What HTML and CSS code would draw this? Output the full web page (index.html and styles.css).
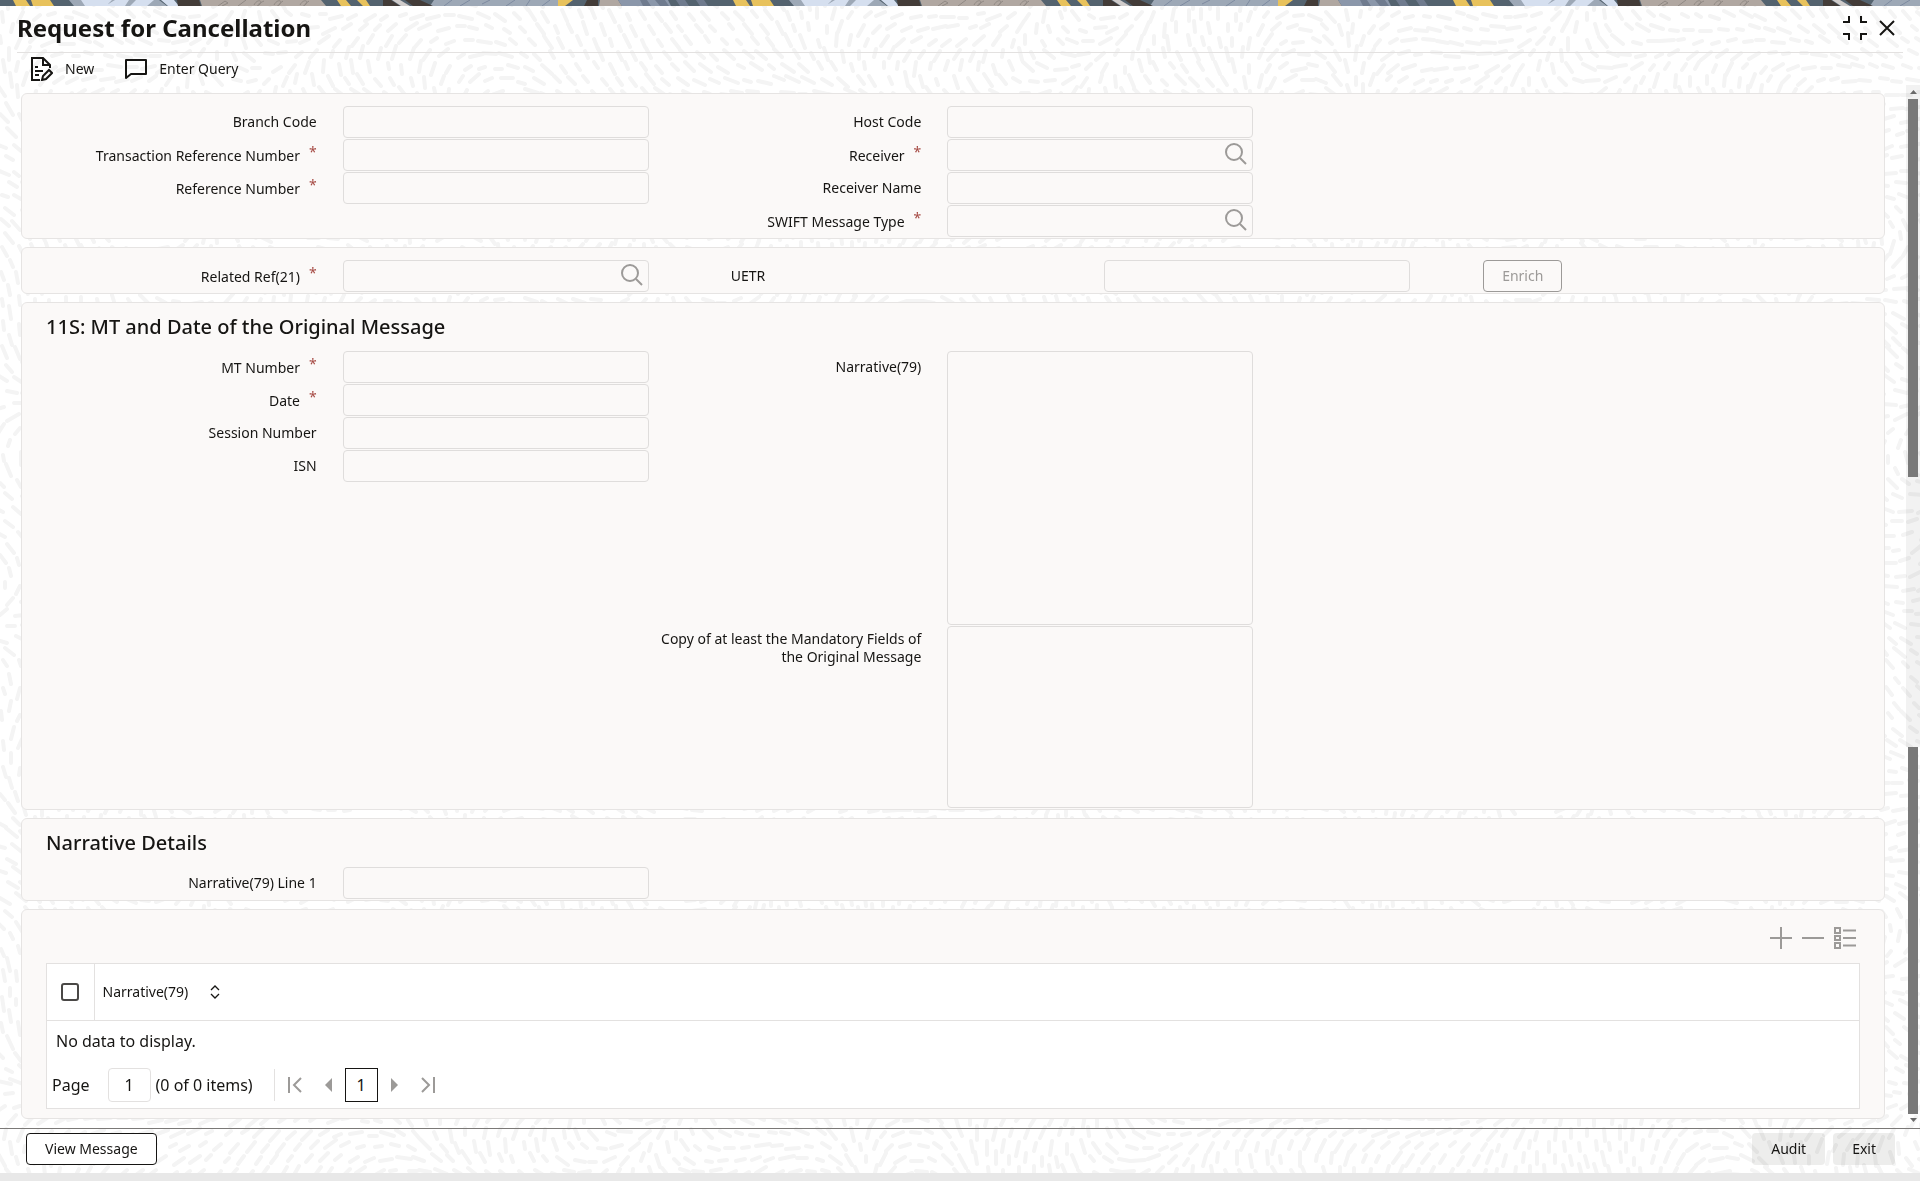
FILE: index.html
```html
<!DOCTYPE html>
<html lang="en">
<head>
<meta charset="utf-8">
<title>Request for Cancellation</title>
<link rel="stylesheet" href="styles.css">
</head>
<body>
<svg class="backdrop" id="backdrop" aria-hidden="true"></svg>
<div class="banner">
  <svg width="100%" height="6" aria-hidden="true">
    <defs>
      <pattern id="strip" width="720" height="6" patternUnits="userSpaceOnUse">
        <rect width="720" height="6" fill="#54636f"/>
        <path fill="#e8c25c" d="M13 0h13l4 6H16zM31 0h19l4 6H33zM337 0h9l5 6h-10zM357 0h9l4 6h-7zM558 0h15l-8 6h-7z"/>
        <path fill="#9da8b6" d="M69 0h90l8 6H74zM434 0h124v6H430z"/>
        <path fill="#d5dfef" d="M81 0h31l-6 6H85zM115 0h14l-4 6h-20zM136 0h18l-7 6h-17zM161 0h13l5 6h-11z"/>
        <path fill="#433c38" d="M177 0h22l2 6h-23zM383 0h8l9 6h-17zM405 0h15l13 6h-20zM587 0h11v6h-14z"/>
        <path fill="#b0a7a1" d="M200 0h121l5 6H202zM600 0h18l4 6h-23z"/>
        <path fill="#d0cccb" d="M392 0h8l10 6h-9z"/>
        <path fill="#8b97aa" d="M618 0h50l3 6h-49z"/>
        <path fill="#6f7b8e" d="M640 0h7l4 6h-8zM655 0h10l4 6h-9zM676 0h9l4 6h-9zM696 0h8l4 6h-8z"/>
        <path fill="none" stroke="#8f8883" d="M218 6l7-5 3 2-6 3M238 6l8-6M254 5c3-6 9-5 6-1s-5 1 4-3M274 5c3-6 9-5 6-1s-4 2 3-3M300 5c3-6 9-5 6-1s-4 2 3-3"/>
        <path fill="none" stroke="#7d8aa0" d="M444 6l8-6M460 6l10-6M482 4l8-4M506 6l9-6M526 6l4-6M542 6l8-6"/>
      </pattern>
    </defs>
    <rect width="100%" height="6" fill="url(#strip)"/>
  </svg>
</div>

<header class="titlebar">
  <h1>Request for Cancellation</h1>
  <div class="window-tools">
    <button type="button" class="icon-btn" aria-label="Collapse">
      <svg width="24" height="24" viewBox="0 0 24 24" fill="none" stroke="#161513" stroke-width="2"><path d="M0 6h6V0M18 0v6h6M0 18h6v6M18 24v-6h6"/></svg>
    </button>
    <button type="button" class="icon-btn" aria-label="Close">
      <svg width="16" height="16" viewBox="0 0 16 16" fill="none" stroke="#161513" stroke-width="2"><path d="M1 1l14 14M15 1L1 15"/></svg>
    </button>
  </div>
</header>

<nav class="toolbar">
  <button type="button" class="tool">
    <svg width="22" height="24" viewBox="0 0 22 24" fill="none" stroke="#161513" stroke-width="2"><path d="M9 23H1V1h11l7 7v3M12 1v7h7M4 10h3M4 14h8M4 18h4"/><path d="M11 23l1-4 6-6 3 3-6 6z"/></svg>
    New
  </button>
  <button type="button" class="tool">
    <svg width="22" height="20" viewBox="0 0 22 20" fill="none" stroke="#161513" stroke-width="2" stroke-linejoin="round"><path d="M1 1h20v14H6l-5 4z"/></svg>
    Enter Query
  </button>
</nav>

<div class="work">
  <main class="panels">
    <section class="panel columns">
      <div class="col">
        <div class="field"><label for="branch">Branch Code</label><input id="branch" type="text"></div>
        <div class="field"><label for="txn" class="req">Transaction Reference Number</label><input id="txn" type="text"></div>
        <div class="field"><label for="ref" class="req">Reference Number</label><input id="ref" type="text"></div>
      </div>
      <div class="col">
        <div class="field"><label for="host">Host Code</label><input id="host" type="text"></div>
        <div class="field"><label for="receiver" class="req">Receiver</label><input id="receiver" type="text"><button type="button" class="lookup" aria-label="Search receiver"><svg width="22" height="22" viewBox="0 0 22 22" fill="none" stroke="#9c9a98" stroke-width="2"><circle cx="9" cy="9" r="8"/><path d="M15 15l6 6"/></svg></button></div>
        <div class="field"><label for="rname">Receiver Name</label><input id="rname" type="text"></div>
        <div class="field"><label for="swift" class="req">SWIFT Message Type</label><input id="swift" type="text"><button type="button" class="lookup" aria-label="Search message type"><svg width="22" height="22" viewBox="0 0 22 22" fill="none" stroke="#9c9a98" stroke-width="2"><circle cx="9" cy="9" r="8"/><path d="M15 15l6 6"/></svg></button></div>
      </div>
    </section>

    <section class="panel related">
      <div class="field"><label for="related" class="req">Related Ref(21)</label><input id="related" type="text"><button type="button" class="lookup" aria-label="Search related reference"><svg width="22" height="22" viewBox="0 0 22 22" fill="none" stroke="#9c9a98" stroke-width="2"><circle cx="9" cy="9" r="8"/><path d="M15 15l6 6"/></svg></button></div>
      <label class="uetr" for="uetr">UETR</label>
      <div class="enrich"><input id="uetr" type="text"><button type="button" class="btn muted" disabled>Enrich</button></div>
    </section>

    <section class="panel">
      <h2>11S: MT and Date of the Original Message</h2>
      <div class="columns">
        <div class="col">
          <div class="field"><label for="mt" class="req">MT Number</label><input id="mt" type="text"></div>
          <div class="field"><label for="date" class="req">Date</label><input id="date" type="text"></div>
          <div class="field"><label for="session">Session Number</label><input id="session" type="text"></div>
          <div class="field"><label for="isn">ISN</label><input id="isn" type="text"></div>
        </div>
        <div class="col">
          <div class="field"><label for="narr">Narrative(79)</label><textarea id="narr" class="tall"></textarea></div>
          <div class="field"><label for="copy" class="wrapped">Copy of at least the Mandatory Fields of the Original Message</label><textarea id="copy" class="medium"></textarea></div>
        </div>
      </div>
    </section>

    <section class="panel">
      <h2>Narrative Details</h2>
      <div class="columns">
        <div class="col">
          <div class="field"><label for="line1">Narrative(79) Line 1</label><input id="line1" type="text"></div>
        </div>
      </div>
    </section>

    <section class="panel grid-panel">
      <div class="row-tools">
        <button type="button" class="icon-btn" aria-label="Add row"><svg width="22" height="22" viewBox="0 0 22 22" stroke="#9c9a98" stroke-width="2"><path d="M11 0v22M0 11h22"/></svg></button>
        <button type="button" class="icon-btn" aria-label="Delete row"><svg width="22" height="22" viewBox="0 0 22 22" stroke="#9c9a98" stroke-width="2"><path d="M0 11h22"/></svg></button>
        <button type="button" class="icon-btn" aria-label="Single record view"><svg width="22" height="22" viewBox="0 0 22 22" fill="none" stroke="#9c9a98" stroke-width="2"><path d="M1 1h5v5H1zM1 9h5v4H1zM1 16h5v5H1zM9 3.500h13M9 11h13M9 18.500h13"/></svg></button>
      </div>
      <div class="table-box">
        <table>
          <thead>
            <tr>
              <th class="check"><input type="checkbox" aria-label="Select all"></th>
              <th><span class="sortable">Narrative(79) <svg width="10" height="14" viewBox="0 0 10 14" fill="none" stroke="#161513" stroke-width="1.300"><path d="M1 5l4-4 4 4M1 9l4 4 4-4"/></svg></span></th>
            </tr>
          </thead>
          <tbody>
            <tr><td colspan="2">No data to display.</td></tr>
          </tbody>
        </table>
        <div class="pager">
          <label for="page">Page</label>
          <input id="page" class="page-no" type="text" value="1">
          <span class="count">(0 of 0 items)</span>
          <div class="steps">
            <button type="button" class="icon-btn" aria-label="First page"><svg width="14" height="16" viewBox="0 0 14 16" fill="none" stroke="#9c9a98" stroke-width="2"><path d="M1 0v16M13 1L6 8l7 7"/></svg></button>
            <button type="button" class="icon-btn" aria-label="Previous page"><svg width="7" height="14" viewBox="0 0 7 14" fill="#9c9a98"><path d="M7 0v14L0 7z"/></svg></button>
            <button type="button" class="current" aria-current="page">1</button>
            <button type="button" class="icon-btn" aria-label="Next page"><svg width="7" height="14" viewBox="0 0 7 14" fill="#9c9a98"><path d="M0 0v14l7-7z"/></svg></button>
            <button type="button" class="icon-btn last" aria-label="Last page"><svg width="14" height="16" viewBox="0 0 14 16" fill="none" stroke="#9c9a98" stroke-width="2"><path d="M13 0v16M1 1l7 7-7 7"/></svg></button>
          </div>
        </div>
      </div>
    </section>
  </main>

  <div class="scroll" aria-hidden="true">
    <div class="scroll-outer">
      <svg class="arrow" width="14" height="14" viewBox="0 0 14 14" fill="#6a6a6a"><path d="M4 9h7L7.500 5z"/></svg>
      <div class="thumb"></div>
    </div>
    <div class="scroll-inner">
      <div class="thumb"></div>
      <svg class="arrow" width="14" height="14" viewBox="0 0 14 14" fill="#6a6a6a"><path d="M4 4h7L7.500 8z"/></svg>
    </div>
  </div>
</div>

<footer class="actions">
  <button type="button" class="btn">View Message</button>
  <div class="right">
    <button type="button" class="btn soft">Audit</button>
    <button type="button" class="btn soft">Exit</button>
  </div>
</footer>
<script src="backdrop.js"></script>
</body>
</html>
```
FILE: styles.css
```css
* { box-sizing: border-box; }

body {
  margin: 0;
  min-height: 100vh;
  display: flex;
  flex-direction: column;
  font: 14px/18px "Noto Sans", "Open Sans", sans-serif;
  color: #161513;
  background: #fff;
}

button, input, textarea { font: inherit; color: inherit; }

.backdrop {
  position: fixed;
  inset: 0;
  width: 100%;
  height: 100%;
  z-index: -1;
}

.banner { height: 6px; }
.banner svg { display: block; }

.titlebar {
  display: flex;
  align-items: center;
  justify-content: space-between;
  height: 47px;
  margin: 0 17px;
  padding-bottom: 2px;
  border-bottom: 1px solid #e3e1e0;
}

h1 { margin: 0; font-size: 24px; line-height: 32px; font-weight: 700; }

h2 { margin: 0; font-size: 20px; line-height: 24px; font-weight: 500; padding-bottom: 12px; }

.window-tools { display: flex; align-items: center; gap: 12px; padding-right: 8px; }

.icon-btn { border: 0; padding: 0; background: none; display: block; }
.icon-btn svg { display: block; }

.toolbar { display: flex; align-items: center; gap: 31px; height: 32px; padding: 0 31px; }

.tool {
  display: flex;
  align-items: center;
  gap: 12px;
  border: 0;
  padding: 0;
  background: none;
}

.work { display: flex; flex: 1; }

.panels {
  flex: 1;
  display: flex;
  flex-direction: column;
  gap: 8px;
  padding: 8px 21px 9px;
}

.panel {
  padding: 12px 24px 0;
  background: #fbf9f8;
  border: 1px solid #e6e4e3;
  border-radius: 6px;
}

.columns { display: grid; grid-template-columns: repeat(3, 1fr); }

.field { position: relative; display: flex; padding: 0 2px 1px 0; }

.field label {
  flex: 1;
  padding: 7px 26px 0 0;
  text-align: right;
}
.field label.wrapped { padding-top: 4px; }

.req::after {
  content: "*";
  margin-left: 9px;
  color: #a64b45;
  vertical-align: 4px;
  line-height: 12px;
}

input[type="text"], textarea {
  display: block;
  width: 306px;
  height: 32px;
  margin: 0;
  padding: 0 8px;
  border: 1px solid #dfdddc;
  border-radius: 4px;
  background: transparent;
  resize: none;
}

textarea.tall { height: 274px; }
textarea.medium { height: 182px; }

.lookup {
  position: absolute;
  right: 8px;
  top: 4px;
  padding: 0;
  border: 0;
  background: none;
}
.lookup svg { display: block; }

.related { display: grid; grid-template-columns: 4fr 3fr 5fr; }
.uetr { padding: 7px 0 0 80px; }
.enrich { display: flex; gap: 73px; }

.btn {
  height: 32px;
  padding: 0 18px;
  border: 1px solid #161513;
  border-radius: 4px;
  background: #fff;
}
.btn.muted { background: transparent; border-color: #9c9a98; color: #9c9a98; }
.btn.soft { border-color: transparent; background: rgba(22, 21, 19, .08); }

.grid-panel { padding-bottom: 9px; }

.row-tools { display: flex; justify-content: flex-end; align-items: flex-start; gap: 10px; height: 41px; padding: 5px 4px 0 0; }

.table-box { border: 1px solid #e3e1e0; background: #fff; }

table { width: 100%; border-collapse: collapse; }
th { height: 56px; padding: 0 8px; text-align: left; font-weight: 400; border-bottom: 1px solid #e3e1e0; }
th.check { width: 47px; padding: 0; border-right: 1px solid #e3e1e0; }
td { padding: 8px 9px 0; font-size: 16px; line-height: 24px; }

input[type="checkbox"] {
  appearance: none;
  display: block;
  width: 18px;
  height: 18px;
  margin: 0 auto;
  border: 2px solid #4a4846;
  border-radius: 3px;
  background: #fff;
}

.sortable { display: inline-flex; align-items: center; gap: 22px; }

.pager { display: flex; align-items: center; padding: 15px 5px 6px; font-size: 16px; line-height: 24px; }
.pager .page-no { width: 43px; height: 34px; margin: 0 5px 0 18px; padding: 0; text-align: center; border-color: #e3e1e0; }
.steps { display: flex; align-items: center; gap: 13px; height: 32px; margin-left: 21px; padding-left: 13px; border-left: 1px solid #e3e1e0; }
.steps .icon-btn:first-child { margin-right: 10px; }
.steps .last { margin-left: 10px; }
.current { width: 33px; height: 34px; padding: 0; border: 1px solid #161513; background: #fff; }

.scroll { width: 14px; display: flex; flex-direction: column; }
.scroll-outer { flex: 662; display: flex; flex-direction: column; background: rgba(0, 0, 0, .05); }
.scroll-inner { flex: 380; display: flex; flex-direction: column; }
.arrow { display: block; flex: none; }
.thumb { width: 10px; margin-left: 2px; background: #797979; }
.scroll-outer .thumb { height: 57%; }
.scroll-inner .thumb { flex: 1; }

.actions {
  display: flex;
  justify-content: space-between;
  padding: 4px 25px 8px 26px;
  border-top: 1px solid #7b7977;
  border-bottom: 9px solid #e8e8e8;
}
.right { display: flex; gap: 8px; }
```
FILE: backdrop.js
```js
// Fills the page backdrop with short pale strokes that follow a flow field.
(function () {
  var svg = document.getElementById('backdrop');
  var seed = 7;
  function rnd() {
    seed = (seed * 16807) % 2147483647;
    return seed / 2147483647;
  }
  function angle(x, y) {
    return Math.sin(x / 70) * 1.3 + Math.cos(y / 55) * 1.2 + Math.sin((x + y) / 110) * 1.5;
  }
  var d = '';
  var row = 0;
  for (var y = 0; y < window.innerHeight + 12; y += 13) {
    row++;
    for (var x = (row % 2) * 8; x < window.innerWidth + 12; x += 16) {
      var cx = x + rnd() * 5, cy = y + rnd() * 5;
      var a = angle(cx, cy), l = 3 + rnd() * 4;
      var dx = Math.cos(a) * l, dy = Math.sin(a) * l;
      d += 'M' + Math.round(cx - dx) + ' ' + Math.round(cy - dy) +
           'L' + Math.round(cx + dx) + ' ' + Math.round(cy + dy);
    }
  }
  var path = document.createElementNS('http://www.w3.org/2000/svg', 'path');
  path.setAttribute('d', d);
  path.setAttribute('fill', 'none');
  path.setAttribute('stroke', '#f4f4f4');
  path.setAttribute('stroke-width', '4');
  path.setAttribute('stroke-linecap', 'round');
  svg.appendChild(path);
})();
```
